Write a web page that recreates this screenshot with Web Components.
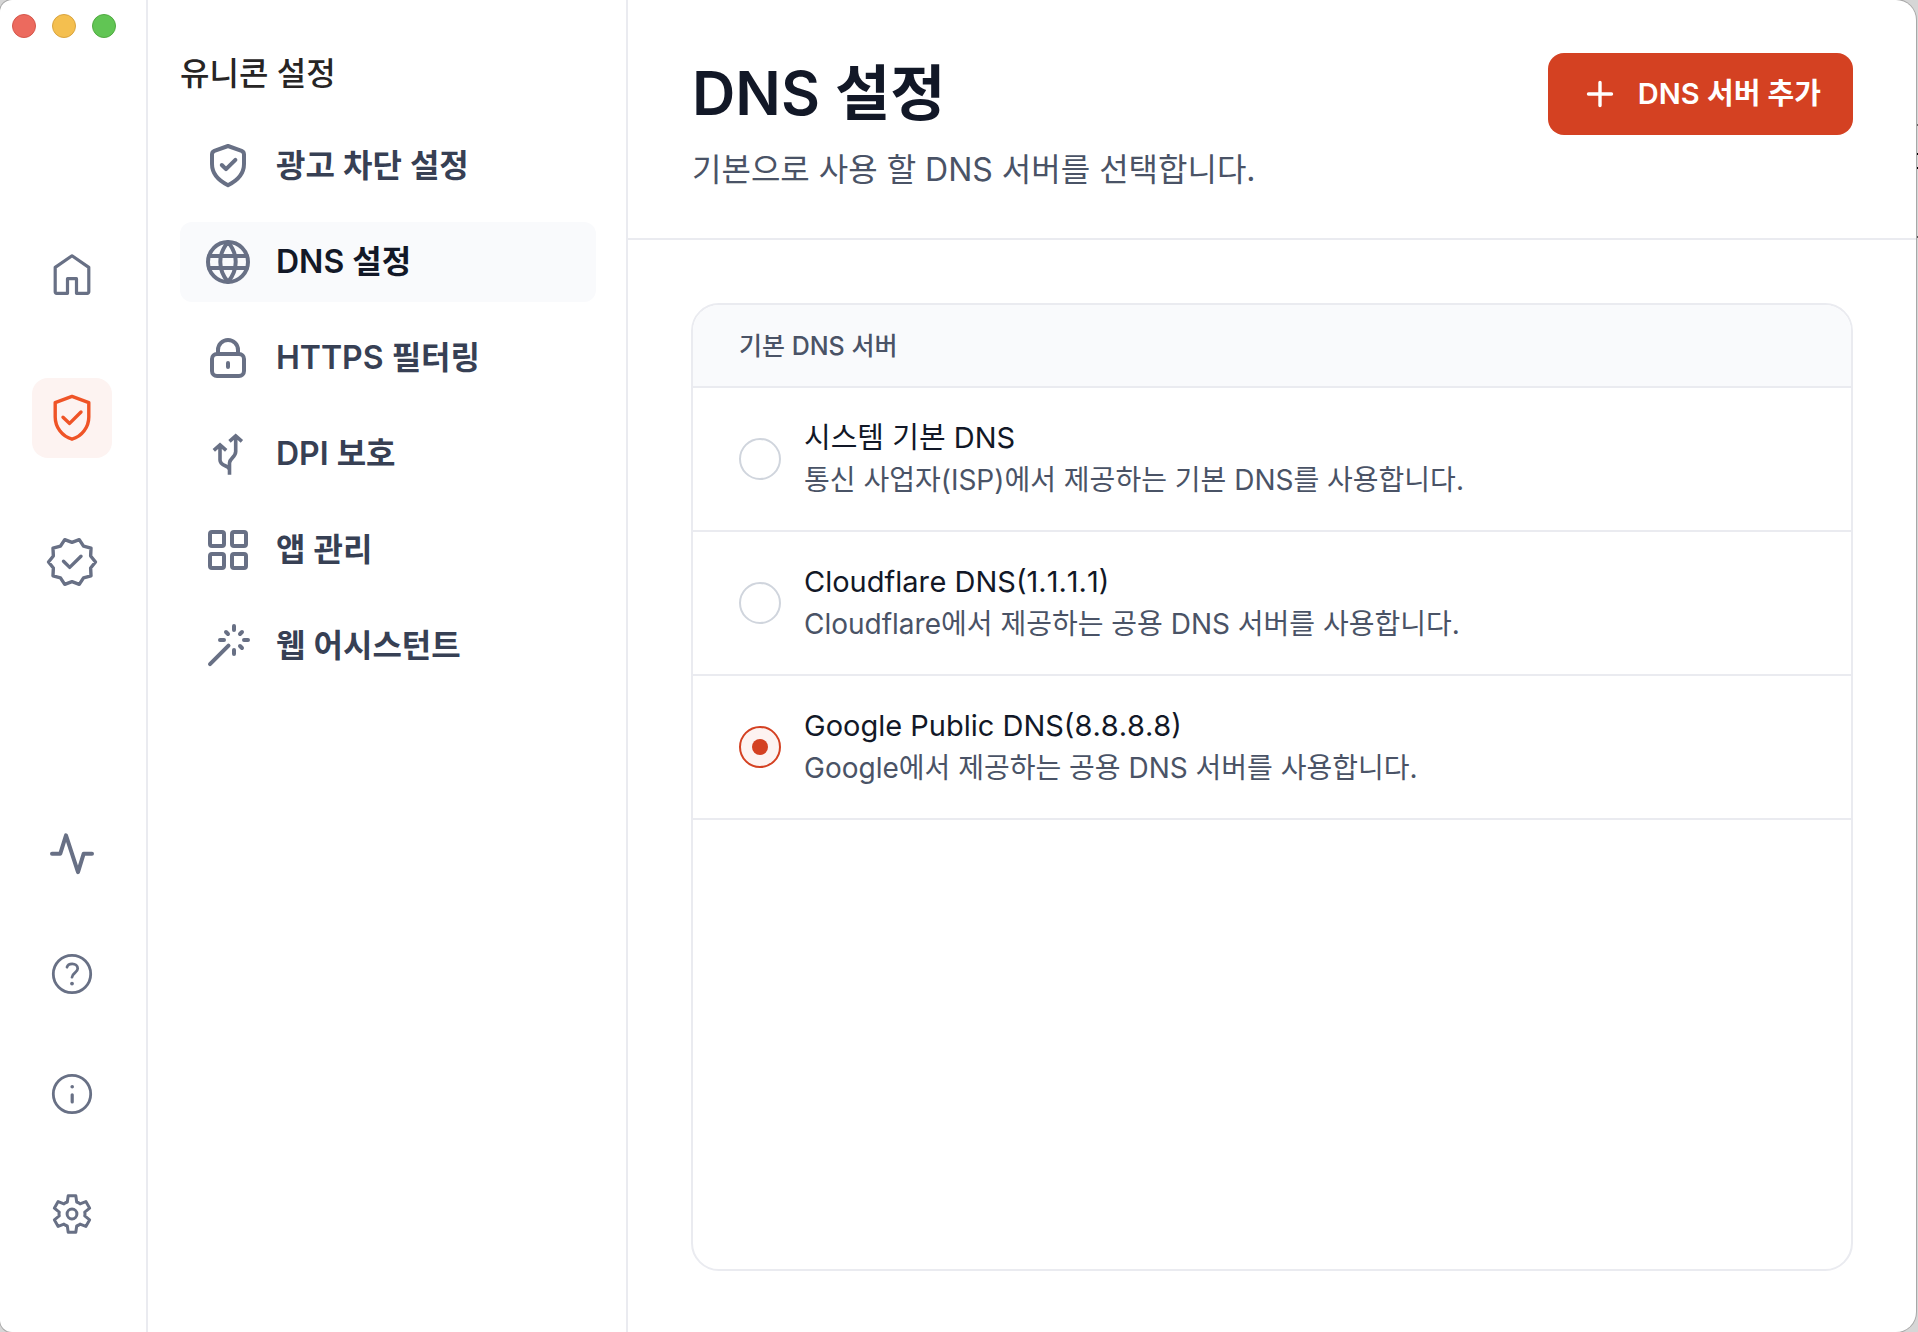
<!DOCTYPE html>
<html lang="ko">
<head>
<meta charset="utf-8">
<meta name="viewport" content="width=device-width, initial-scale=1">
<title>유니콘 설정</title>
<style>
  :root {
    --ink: #121827; --ink-soft: #374054; --ink-mute: #4a5366; --icon: #687085;
    --line: #eaebf0; --tint: #f9fafc; --accent: #d44122; --accent-tint: #fdf3f1;
  }
  html { background: #d6d6d6; }
  body { margin: 0; font-family: Inter, "Noto Sans CJK KR", sans-serif; color: var(--ink); }
</style>
</head>
<body>
<app-window>
  <side-rail slot="rail"></side-rail>
  <settings-nav slot="nav" heading="유니콘 설정">
    <nav-item icon="shield">광고 차단 설정</nav-item>
    <nav-item icon="globe" active>DNS 설정</nav-item>
    <nav-item icon="lock">HTTPS 필터링</nav-item>
    <nav-item icon="split">DPI 보호</nav-item>
    <nav-item icon="grid">앱 관리</nav-item>
    <nav-item icon="wand">웹 어시스턴트</nav-item>
  </settings-nav>
  <page-header>
    <span slot="title">DNS 설정</span>
    <span slot="subtitle">기본으로 사용 할 DNS 서버를 선택합니다.</span>
    <primary-button slot="action">DNS 서버 추가</primary-button>
  </page-header>
  <option-card heading="기본 DNS 서버">
    <dns-option value="system">시스템 기본 DNS<span slot="note">통신 사업자(ISP)에서 제공하는 기본 DNS를 사용합니다.</span></dns-option>
    <dns-option value="cloudflare">Cloudflare DNS(1.1.1.1)<span slot="note">Cloudflare에서 제공하는 공용 DNS 서버를 사용합니다.</span></dns-option>
    <dns-option value="google" checked>Google Public DNS(8.8.8.8)<span slot="note">Google에서 제공하는 공용 DNS 서버를 사용합니다.</span></dns-option>
  </option-card>
</app-window>

<script>
const polar = (r, deg) => {
  const a = deg * Math.PI / 180;
  return (24 + r * Math.cos(a)).toFixed(2) + ' ' + (24 + r * Math.sin(a)).toFixed(2);
};
const badge = () => {
  const pts = [];
  for (let i = 0; i < 10; i++) pts.push(polar(23.5, i * 36), polar(19.6, i * 36 + 18));
  return 'M' + pts.join('L') + 'Z';
};
const gear = () => {
  const tooth = [[-4.7, -12], [-3.8, -18.2], [3.8, -18.2], [4.7, -12]];
  const pts = [];
  for (let i = 0; i < 6; i++) {
    const a = i * Math.PI / 3;
    for (const [x, y] of tooth)
      pts.push((24 + x * Math.cos(a) - y * Math.sin(a)).toFixed(2) + ' ' + (24 + x * Math.sin(a) + y * Math.cos(a)).toFixed(2));
    const v = a + Math.PI / 6;
    pts.push((24 + 13 * Math.sin(v)).toFixed(2) + ' ' + (24 - 13 * Math.cos(v)).toFixed(2));
  }
  return 'M' + pts.join('L') + 'Z';
};

/* Each entry: stroke width, then the shapes on a 48 x 48 grid. */
const ICONS = {
  home: [3.2, '<path d="M24 5.8 40.8 17.4V41.8a1.5 1.5 0 0 1-1.5 1.5H28.5V28.7H19.5V43.3H8.7a1.5 1.5 0 0 1-1.5-1.5V17.4Z"/>'],
  guard: [3.4, '<path d="M24 2.4 40.8 8.6V23C40.8 33 34 42.5 24 45.2 14 42.5 7.2 33 7.2 23V8.6Z"/><path d="m15 23.2 6.6 6.2L33 18"/>'],
  badge: [3.4, '<path d="' + badge() + '"/><path d="m15.5 23.2 6.2 6.2L33 18.2"/>'],
  pulse: [4, '<path d="M4 23.7H12.3L18 5.4 30 42.2 35.7 23.7H44"/>'],
  help: [2.8, '<circle cx="24" cy="24" r="18.7"/><path d="M19 17.2C19.6 15 21.6 13.8 24.2 13.8c3 0 5.5 1.8 5.5 4.8 0 4.2-5.5 4.4-5.7 8.6"/><circle cx="24" cy="33.6" r="1.9" fill="currentColor" stroke="none"/>'],
  info: [2.8, '<circle cx="24" cy="24" r="18.7"/><path stroke-width="3.2" d="M24.2 24.8V32"/><circle cx="24.2" cy="16.8" r="1.8" fill="currentColor" stroke="none"/>'],
  gear: [3, '<path d="' + gear() + '"/><circle cx="24" cy="24" r="4.9"/>'],
  shield: [4, '<path d="M24 4 37.6 8.8Q40 9.8 40 12.4V22C40 31 33.5 38.5 24 43.2 14.5 38.5 8 31 8 22V12.4Q8 9.8 10.4 8.8Z"/><path d="m17.8 23 4.2 4.2 9.4-9.4"/>'],
  globe: [4, '<circle cx="24" cy="24" r="20"/><path d="M5 18H43M5 30H43M24 4C19 10 16.3 17 16.3 24S19 38 24 44M24 4C29 10 31.7 17 31.7 24S29 38 24 44"/>'],
  lock: [4, '<rect x="8" y="20" width="32" height="22" rx="5"/><path d="M14 20V16a10 10 0 0 1 20 0V20M24 29V33"/>'],
  split: [3.6, '<path stroke-linecap="butt" stroke-linejoin="miter" d="M25.5 44.8V33C25.5 28 31.7 27.5 31.7 21.500V6M16 15V30C16 36.500 25.500 35 25.500 40M25.500 11.400 31.700 6 37.900 11.400M9.800 20.400 16 15 22.200 20.400"/>'],
  grid: [4, '<rect x="6" y="6" width="14" height="14" rx="2"/><rect x="28" y="6" width="14" height="14" rx="2"/><rect x="6" y="28" width="14" height="14" rx="2"/><rect x="28" y="28" width="14" height="14" rx="2"/>'],
  wand: [4, '<path d="M6 42.2 24.5 23.7M30 4V8M30 28V32M16 18H20M40 18H44M22 10 24 12M38 10 36 12M36 24 38 26"/>'],
  plus: [3.4, '<path d="M24 12.5V35.5M12.5 24H35.5"/>']
};

const define = (name, html, setup) => {
  const tpl = document.createElement('template');
  tpl.innerHTML = html;
  customElements.define(name, class extends HTMLElement {
    connectedCallback() {
      if (this.shadowRoot) return;
      this.attachShadow({ mode: 'open' }).append(tpl.content.cloneNode(true));
      if (setup) setup(this, this.shadowRoot);
    }
  });
};

define('line-icon', `<style>
  :host { display: block; width: 48px; height: 48px; flex: none; }
  svg { display: block; width: 100%; height: 100%; overflow: visible; }
</style><svg viewBox="0 0 48 48" fill="none" stroke="currentColor" stroke-linecap="round" stroke-linejoin="round" aria-hidden="true"></svg>`,
(el, root) => {
  const [width, shapes] = ICONS[el.getAttribute('name')];
  const svg = root.querySelector('svg');
  svg.setAttribute('stroke-width', width);
  svg.innerHTML = shapes;
});

define('window-dots', `<style>
  :host { display: flex; gap: 16px; }
  button { width: 24px; height: 24px; padding: 0; border: 1px solid; border-radius: 50%; }
  .close { background: #ec6a5e; border-color: #d5564b; }
  .min { background: #f4bf4f; border-color: #d9a43f; }
  .max { background: #61c554; border-color: #50aa41; }
</style><button class="close" aria-label="닫기"></button><button class="min" aria-label="최소화"></button><button class="max" aria-label="확대"></button>`);

define('rail-button', `<style>
  :host { display: block; }
  button { display: grid; place-items: center; width: 80px; height: 80px; padding: 0; border: 0; border-radius: 16px; background: none; color: var(--icon); }
  :host([active]) button { background: var(--accent-tint); color: #ef5427; }
</style><button></button>`, (el, root) => {
  const button = root.querySelector('button');
  button.setAttribute('aria-label', el.getAttribute('label'));
  button.innerHTML = '<line-icon name="' + el.getAttribute('icon') + '"></line-icon>';
});

define('side-rail', `<style>
  :host { display: flex; flex-direction: column; box-sizing: border-box; width: 148px; border-right: 2px solid var(--line); padding: 14px 0 78px; }
  window-dots { margin-left: 12px; }
  nav { flex: 1; display: flex; flex-direction: column; justify-content: space-between; padding: 196px 0 0 32px; }
  .group { display: flex; flex-direction: column; gap: 64px; }
  .tools { gap: 40px; }
</style><window-dots></window-dots><nav aria-label="주 메뉴">
  <div class="group"><rail-button icon="home" label="홈"></rail-button><rail-button icon="guard" label="보호 설정" active></rail-button><rail-button icon="badge" label="인증"></rail-button></div>
  <div class="group tools"><rail-button icon="pulse" label="활동"></rail-button><rail-button icon="help" label="도움말"></rail-button><rail-button icon="info" label="정보"></rail-button><rail-button icon="gear" label="환경설정"></rail-button></div>
</nav>`);

define('settings-nav', `<style>
  :host { display: block; box-sizing: border-box; width: 480px; border-right: 2px solid var(--line); padding: 50px 30px 48px 32px; }
  h2 { margin: 0 0 28px; font-size: 32px; line-height: 48px; font-weight: 500; color: #272525; }
  nav { display: flex; flex-direction: column; gap: 16px; }
</style><h2></h2><nav aria-label="설정"><slot></slot></nav>`, (el, root) => {
  root.querySelector('h2').textContent = el.getAttribute('heading');
});

define('nav-item', `<style>
  :host { display: block; }
  a { display: flex; align-items: center; gap: 24px; height: 80px; padding: 0 24px; border-radius: 12px; font-size: 32px; line-height: 48px; font-weight: 600; color: var(--ink-soft); text-decoration: none; }
  line-icon { color: var(--icon); }
  :host([active]) a { background: var(--tint); color: var(--ink); }
</style><a href="#"><span><slot></slot></span></a>`, (el, root) => {
  const icon = document.createElement('line-icon');
  icon.setAttribute('name', el.getAttribute('icon'));
  const link = root.querySelector('a');
  link.prepend(icon);
  if (el.hasAttribute('active')) link.setAttribute('aria-current', 'page');
});

define('primary-button', `<style>
  :host { display: block; flex: none; }
  button { display: flex; align-items: center; gap: 14px; height: 82px; padding: 0 32px 0 28px; border: 0; border-radius: 16px; background: var(--accent); color: #fff; font: 600 29px/42px Inter, "Noto Sans CJK KR", sans-serif; }
</style><button><line-icon name="plus"></line-icon><span><slot></slot></span></button>`);

define('page-header', `<style>
  :host { display: flex; align-items: flex-start; justify-content: space-between; gap: 32px; padding: 53px 63px 44px 64px; border-bottom: 2px solid var(--line); }
  h1 { margin: 0; font-size: 60px; line-height: 80px; font-weight: 600; }
  p { margin: 13px 0 0; font-size: 32px; line-height: 48px; color: var(--ink-mute); }
</style><div><h1><slot name="title"></slot></h1><p><slot name="subtitle"></slot></p></div><slot name="action"></slot>`);

define('option-card', `<style>
  :host { flex: 1; display: block; margin: 63px 63px 61px; border: 2px solid var(--line); border-radius: 28px; overflow: hidden; }
  h2 { margin: 0; padding: 21px 46px 20px; font-size: 25px; line-height: 40px; font-weight: 500; color: var(--ink-mute); background: var(--tint); border-bottom: 2px solid var(--line); }
</style><h2></h2><div role="radiogroup"><slot></slot></div>`, (el, root) => {
  const heading = el.getAttribute('heading');
  root.querySelector('h2').textContent = heading;
  root.querySelector('div').setAttribute('aria-label', heading);
  el.addEventListener('pick', e => {
    for (const option of el.querySelectorAll('dns-option'))
      option.shadowRoot.querySelector('input').checked = option === e.target;
  });
});

define('dns-option', `<style>
  :host { display: block; border-bottom: 2px solid var(--line); }
  label { display: flex; align-items: center; gap: 23px; padding: 29px 46px; }
  input { appearance: none; flex: none; display: grid; place-items: center; box-sizing: border-box; width: 42px; height: 42px; margin: 0; border: 2px solid #d0d5dd; border-radius: 50%; background: #fff; }
  input:checked { border-color: var(--accent); background: var(--accent-tint); }
  input:checked::before { content: ""; width: 16px; height: 16px; border-radius: 50%; background: var(--accent); }
  .text { display: flex; flex-direction: column; font-size: 28px; line-height: 42px; }
  .name { font-size: 29px; font-kerning: none; }
  .note { color: var(--ink-mute); }
</style><label><input type="radio" name="dns"><span class="text"><span class="name"><slot></slot></span><span class="note"><slot name="note"></slot></span></span></label>`, (el, root) => {
  const input = root.querySelector('input');
  input.value = el.getAttribute('value');
  input.checked = el.hasAttribute('checked');
  input.addEventListener('change', () => el.dispatchEvent(new CustomEvent('pick', { bubbles: true })));
});

define('app-window', `<style>
  :host { display: block; min-height: 100vh; padding-right: 2px; box-sizing: border-box;
    background: linear-gradient(#0000 124px, #666 124px 126px, #0000 126px 153px, #000 153px 155px, #0000 155px 167px, #000 167px 169px, #0000 169px 236px, #555 236px 238px, #0000 238px) right / 2px 100% no-repeat; }
  .frame { display: flex; min-height: 100vh; background: #fff; border-radius: 12px 20px 20px 12px; box-shadow: 0 0 0 1px #a8a8a8; overflow: hidden; }
  main { flex: 1; min-width: 0; display: flex; flex-direction: column; }
  ::slotted([slot]) { flex: none; }
</style><div class="frame"><slot name="rail"></slot><slot name="nav"></slot><main><slot></slot></main></div>`);
</script>
</body>
</html>
